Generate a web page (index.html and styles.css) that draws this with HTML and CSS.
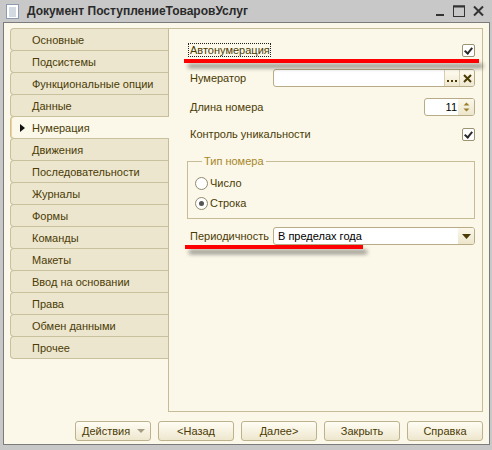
FILE: index.html
```html
<!DOCTYPE html>
<html lang="ru">
<head>
<meta charset="UTF-8" />
<title>Документ ПоступлениеТоваровУслуг</title>
<link rel="stylesheet" href="styles.css">
</head>
<body>
<div class="window">
  <div class="titlebar">
    <svg class="doc-icon" width="13" height="15" viewBox="0 0 13 15">
      <rect x="0.5" y="0.5" width="12" height="14" fill="#fff" stroke="#8d9bb0"/>
      <path d="M3 4h7M3 6h7M3 8h7M3 10h7M3 12h7" stroke="#a9b4c4" stroke-width="1"/>
    </svg>
    <span class="title">Документ ПоступлениеТоваровУслуг</span>
    <div class="controls">
      <svg width="10" height="12" viewBox="0 0 10 12"><rect x="1" y="9" width="8" height="2" fill="#333"/></svg>
      <svg width="12" height="12" viewBox="0 0 12 12"><rect x="0.5" y="1" width="11" height="10.5" fill="none" stroke="#333"/><rect x="0" y="0.5" width="12" height="2" fill="#333"/></svg>
      <svg width="11" height="12" viewBox="0 0 11 12"><path d="M1 1.5l9 9M10 1.5l-9 9" stroke="#333" stroke-width="2"/></svg>
    </div>
  </div>

  <div class="client">
    <div class="main">
      <ul class="tabs">
        <li class="tab">Основные</li>
        <li class="tab">Подсистемы</li>
        <li class="tab">Функциональные опции</li>
        <li class="tab">Данные</li>
        <li class="tab active">Нумерация</li>
        <li class="tab">Движения</li>
        <li class="tab">Последовательности</li>
        <li class="tab">Журналы</li>
        <li class="tab">Формы</li>
        <li class="tab">Команды</li>
        <li class="tab">Макеты</li>
        <li class="tab">Ввод на основании</li>
        <li class="tab">Права</li>
        <li class="tab">Обмен данными</li>
        <li class="tab">Прочее</li>
      </ul>

      <div class="panel">
        <div class="row row-auto">
          <span class="label focus">Автонумерация</span>
          <span class="checkbox checked"></span>
        </div>

        <div class="row row-numerator">
          <span class="label">Нумератор</span>
          <div class="field">
            <span class="field-value"></span>
            <span class="field-btn dots">
              <svg width="10" height="10" viewBox="0 0 10 10"><path d="M0 7h2v2H0zM4 7h2v2H4zM8 7h2v2H8z" fill="#4b3b04"/></svg>
            </span>
            <span class="field-btn clear">
              <svg width="9" height="9" viewBox="0 0 9 9"><path d="M1 1l7 7M8 1l-7 7" stroke="#4b3b04" stroke-width="2"/></svg>
            </span>
          </div>
        </div>

        <div class="row row-length">
          <span class="label">Длина номера</span>
          <div class="field spin">
            <span class="field-value">11</span>
            <span class="spin-btn">
              <svg width="7" height="12" viewBox="0 0 7 12"><path d="M0.5 4.5L3.5 1.5L6.5 4.5z M0.5 7.5L3.5 10.5L6.5 7.5z" fill="#9b7f2c"/></svg>
            </span>
          </div>
        </div>

        <div class="row row-unique">
          <span class="label">Контроль уникальности</span>
          <span class="checkbox checked"></span>
        </div>

        <fieldset class="group">
          <legend>Тип номера</legend>
          <div class="radio-row"><span class="radio"></span>Число</div>
          <div class="radio-row"><span class="radio on"></span>Строка</div>
        </fieldset>

        <div class="row row-period">
          <span class="label">Периодичность</span>
          <div class="field select">
            <span class="field-value">В пределах года</span>
            <span class="drop-btn">
              <svg width="9" height="5" viewBox="0 0 9 5"><path d="M0 0h9L4.5 5z" fill="#4b3b04"/></svg>
            </span>
          </div>
        </div>

        <div class="marker marker-auto"></div>
        <div class="marker marker-period"></div>
      </div>
    </div>

    <div class="footer">
      <button class="btn actions">Действия <span class="caret"></span></button>
      <button class="btn">&lt;Назад</button>
      <button class="btn">Далее&gt;</button>
      <button class="btn">Закрыть</button>
      <button class="btn">Справка</button>
    </div>
  </div>
</div>
</body>
</html>
```

FILE: styles.css
```css
:root {
  --frame: #c8c8c8;
  --frame-line: #7c7c7c;
  --cream: #fbf8e9;
  --tab-bg: #ece6cf;
  --tab-border: #c9c09e;
  --panel-border: #c6bd98;
  --text: #4b3b04;
  --legend: #a7862a;
  --ctl-border: #b7ac86;
  --font: "Liberation Sans", Arial, sans-serif;
}

* {
  box-sizing: border-box;
}

body {
  margin: 0;
  font-family: var(--font);
  font-size: 11px;
  color: var(--text);
}

.window {
  width: 492px;
  height: 450px;
  background: var(--frame);
  display: flex;
  flex-direction: column;
}

.titlebar {
  height: 22px;
  display: flex;
  align-items: center;
  padding: 0 8px 0 6px;
}

.doc-icon {
  margin-right: 8px;
}

.title {
  font-weight: bold;
  font-size: 12px;
  color: #2a2a2a;
  flex: 1;
}

.controls {
  display: flex;
  align-items: center;
  gap: 8px;
}

.client {
  margin: 0 2px 0 3px;
  height: 423px;
  border: 1px solid var(--frame-line);
  background: var(--cream);
  display: flex;
  flex-direction: column;
}

.main {
  display: flex;
  padding: 5px 5px 0 6px;
  height: 389px;
}

/* left tabs */
.tabs {
  list-style: none;
  margin: 0;
  padding: 0;
  width: 158px;
  flex-shrink: 0;
}

.tab {
  position: relative;
  height: 23px;
  margin-top: -1px;
  padding-left: 21px;
  display: flex;
  align-items: center;
  background: var(--tab-bg);
  border: 1px solid var(--tab-border);
  border-right: none;
  border-radius: 4px 0 0 4px;
  white-space: nowrap;
}

.tab:first-child {
  margin-top: 0;
}

.tab.active {
  background: var(--cream);
  margin-right: -1px;
  z-index: 1;
  box-shadow: inset 1px 0 0 #f3d38a;
}

.tab.active::before {
  content: "";
  position: absolute;
  left: 9px;
  top: 7px;
  border-left: 5px solid #111;
  border-top: 4px solid transparent;
  border-bottom: 4px solid transparent;
}

/* right panel */
.panel {
  position: relative;
  width: 315px;
  height: 384px;
  border: 1px solid var(--panel-border);
  padding: 11px 7px 0 19px;
}

.row {
  display: flex;
  align-items: center;
  height: 18px;
}

.row .label {
  width: 85px;
  flex-shrink: 0;
  white-space: nowrap;
  padding-left: 2px;
}

.row-auto {
  height: 20px;
  justify-content: space-between;
}

.row-auto .label.focus {
  width: auto;
  outline: 1px dotted #222;
  outline-offset: -1px;
  padding: 1px 1px 1px 2px;
}

.row-numerator {
  margin-top: 9px;
}

.row-length {
  margin-top: 11px;
}

.row-unique {
  margin-top: 9px;
  justify-content: space-between;
}

.row-unique .label {
  width: auto;
}

.checkbox {
  width: 13px;
  height: 13px;
  border: 1px solid #9c9373;
  border-radius: 2px;
  background: #fff;
  position: relative;
}

.checkbox.checked::after {
  content: "";
  position: absolute;
  left: 3px;
  top: 1px;
  width: 3px;
  height: 6px;
  border-right: 2px solid #2a2a2a;
  border-bottom: 2px solid #2a2a2a;
  transform: rotate(40deg);
}

.field {
  flex: 1;
  height: 18px;
  display: flex;
  border: 1px solid var(--ctl-border);
  border-radius: 3px;
  background: #fff;
  overflow: hidden;
}

.field-value {
  flex: 1;
  padding: 0 3px;
  line-height: 16px;
  color: #000;
}

.field-btn {
  width: 15px;
  display: flex;
  align-items: center;
  justify-content: center;
  background: linear-gradient(#fffdf2, #efe8d0);
  border-left: 1px solid #d8cfae;
}

.field.spin {
  flex: 0 0 51px;
  margin-left: auto;
}

.field.spin .field-value {
  text-align: right;
  padding-right: 1px;
}

.spin-btn,
.drop-btn {
  width: 16px;
  display: flex;
  align-items: center;
  justify-content: center;
  background: linear-gradient(#fbf8ea, #ede6cc);
}

.field.select .field-value {
  padding-left: 4px;
}

/* group box */
.group {
  margin: 12px 0 0 -1px;
  padding: 6px 8px 8px 7px;
  height: 64px;
  border: 1px solid var(--panel-border);
}

.group legend {
  color: var(--legend);
  padding: 0 2px;
  margin-left: 7px;
}

.radio-row {
  display: flex;
  align-items: center;
  height: 20px;
}

.radio {
  width: 13px;
  height: 13px;
  border: 1px solid #918a6c;
  border-radius: 50%;
  background: #fff;
  margin-right: 2px;
  display: flex;
  align-items: center;
  justify-content: center;
}

.radio.on::after {
  content: "";
  width: 5px;
  height: 5px;
  border-radius: 50%;
  background: #555;
}

.row-period {
  margin-top: 8px;
}

/* red markers over the form */
.marker {
  position: absolute;
  height: 4px;
  background: #ff0000;
  box-shadow: 4px 5px 4px rgba(0, 0, 0, 0.45);
}

.marker-auto {
  left: 15px;
  top: 30px;
  width: 295px;
}

.marker-period {
  left: 16px;
  top: 216px;
  width: 178px;
}

/* bottom buttons */
.footer {
  display: flex;
  justify-content: flex-end;
  gap: 7px;
  padding: 9px 6px 0 0;
}

.btn {
  width: 76px;
  height: 20px;
  font-family: var(--font);
  font-size: 11px;
  color: var(--text);
  background: linear-gradient(#fffdf4, #eee7ce);
  border: 1px solid #bcb28d;
  border-radius: 3px;
  padding: 0;
}

.btn.actions {
  display: flex;
  align-items: center;
  padding-left: 6px;
  gap: 7px;
}

.caret {
  border-top: 4px solid #a59d85;
  border-left: 4px solid transparent;
  border-right: 4px solid transparent;
}
```
